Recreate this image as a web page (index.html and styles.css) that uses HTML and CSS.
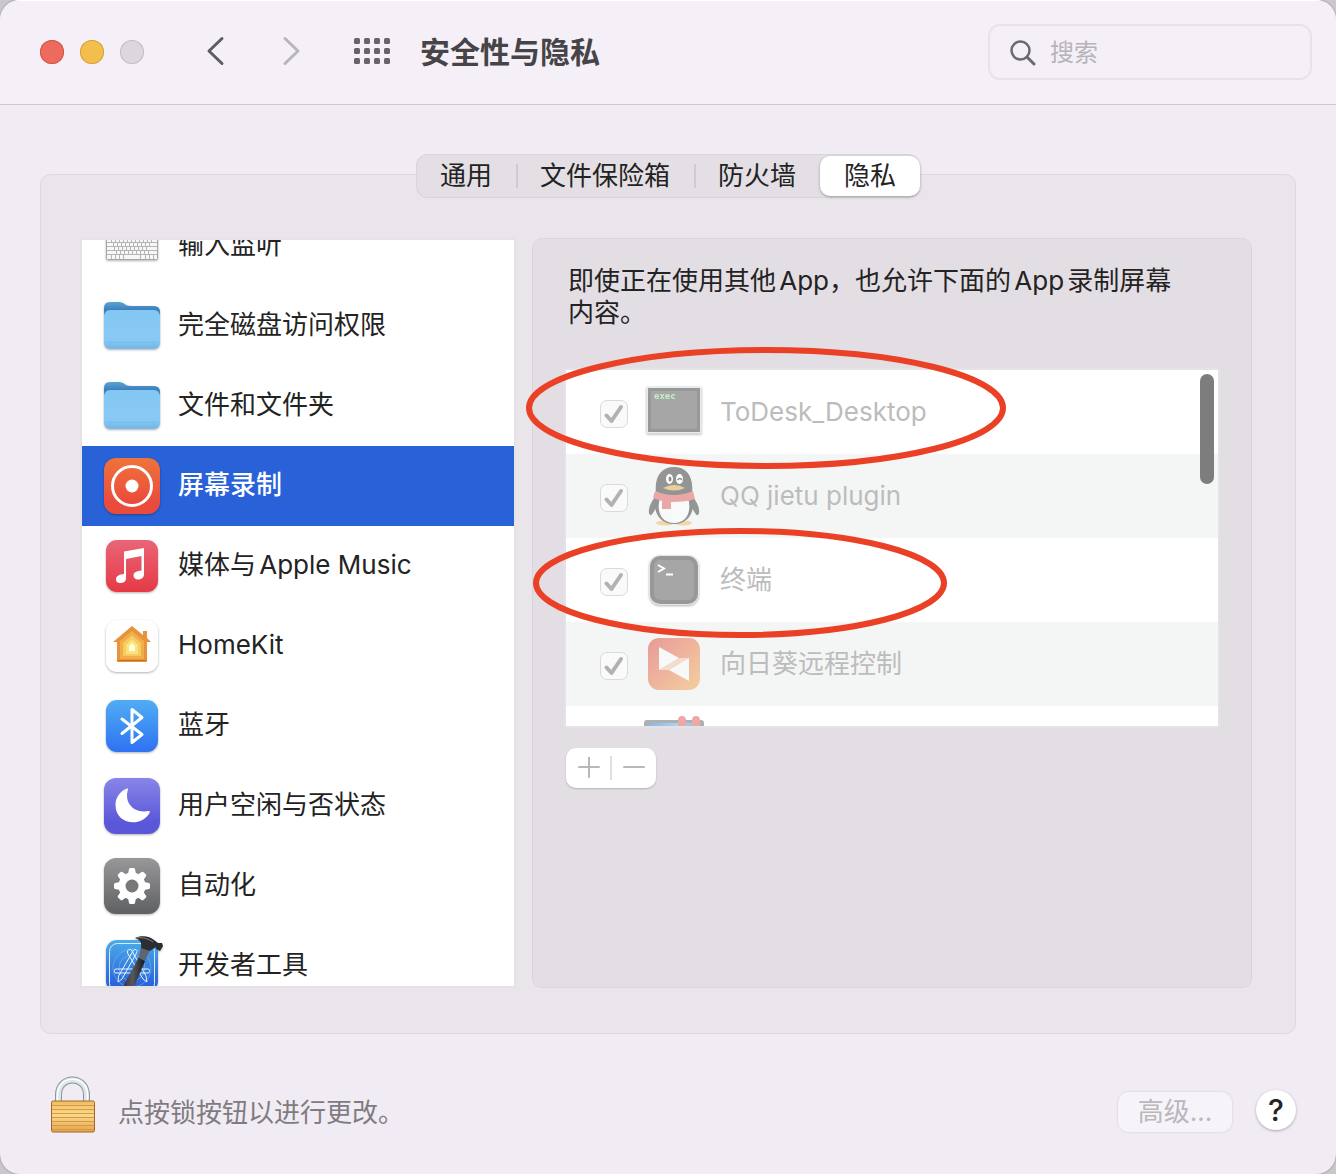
FILE: index.html
```html
<!DOCTYPE html>
<html lang="zh-CN">
<head>
<meta charset="utf-8">
<meta name="viewport" content="width=device-width, initial-scale=1">
<title>安全性与隐私</title>
<link rel="stylesheet" href="styles.css">
</head>
<body>
<svg class="defs" width="0" height="0" aria-hidden="true">
  <defs>
    <linearGradient id="g-back" x2="0" y2="1"><stop offset="0" stop-color="#5ba3d4"/><stop offset=".4" stop-color="#3b7fbd"/></linearGradient>
    <linearGradient id="g-front" x2="0" y2="1"><stop offset="0" stop-color="#84c7f3"/><stop offset=".75" stop-color="#88c9f5"/><stop offset="1" stop-color="#74b7e8"/></linearGradient>
    <linearGradient id="g-record" x2="0" y2="1"><stop offset="0" stop-color="#ef733a"/><stop offset=".8" stop-color="#ea4b3c"/></linearGradient>
    <linearGradient id="g-music" x2="0" y2="1"><stop offset="0" stop-color="#ea6578"/><stop offset="1" stop-color="#e53a45"/></linearGradient>
    <linearGradient id="g-blue" x2="0" y2="1"><stop offset="0" stop-color="#4fadf4"/><stop offset="1" stop-color="#2f72f3"/></linearGradient>
    <linearGradient id="g-moon" x2="0" y2="1"><stop offset="0" stop-color="#8886e8"/><stop offset=".8" stop-color="#5a57d9"/></linearGradient>
    <linearGradient id="g-gear" x2="0" y2="1"><stop offset="0" stop-color="#98989b"/><stop offset="1" stop-color="#5f6062"/></linearGradient>
    <linearGradient id="g-dev" x2="0" y2="1"><stop offset="0" stop-color="#4cabe9"/><stop offset="1" stop-color="#2557d6"/></linearGradient>
    <linearGradient id="g-sun" x2="1" y2="1"><stop offset="0" stop-color="#e99a98"/><stop offset="1" stop-color="#f3cfa0"/></linearGradient>
    <linearGradient id="g-screen" x2="1"><stop offset="0" stop-color="#8fb4e2"/><stop offset=".6" stop-color="#a9d8f3"/><stop offset="1" stop-color="#9bb4dc"/></linearGradient>
    <linearGradient id="g-brass" x2="0" y2="1"><stop offset="0" stop-color="#f1bd5f"/><stop offset=".45" stop-color="#fbd98b"/><stop offset="1" stop-color="#e5a448"/></linearGradient>
    <linearGradient id="g-handle" x2="1"><stop offset="0" stop-color="#2a2b2f"/><stop offset=".5" stop-color="#56585e"/><stop offset="1" stop-color="#17181b"/></linearGradient>
    <symbol id="folder" viewBox="0 0 56 56">
      <path d="M0 10Q0 4 6 4H15C21 4 20 8 27 8H50Q56 8 56 14V24H0Z" fill="url(#g-back)"/>
      <rect y="12" width="56" height="39" rx="6" fill="url(#g-front)"/>
      <path d="M3 44.500H53M3 47.500H53" stroke="#79bbe9"/>
    </symbol>
    <symbol id="check" viewBox="0 0 28 28"><path d="M6.500 15.500 11.500 21 21 7" fill="none" stroke="#b2b2b2" stroke-width="4" stroke-linecap="round" stroke-linejoin="round"/></symbol>
  </defs>
</svg>

<div class="window">
  <header class="toolbar">
    <div class="lights">
      <button class="light light-close" aria-label="关闭"></button>
      <button class="light light-min" aria-label="最小化"></button>
      <button class="light light-zoom" aria-label="缩放" disabled></button>
    </div>
    <div class="history">
      <button class="tool" aria-label="后退"><svg width="20" height="32" viewBox="0 0 20 32"><path d="M17 2.500 4 15 17 27.500" fill="none" stroke="#5f5b62" stroke-width="3" stroke-linecap="round" stroke-linejoin="round"/></svg></button>
      <button class="tool" aria-label="前进" disabled><svg width="20" height="32" viewBox="0 0 20 32"><path d="M4 2.500 17 15 4 27.500" fill="none" stroke="#b9b5bc" stroke-width="3" stroke-linecap="round" stroke-linejoin="round"/></svg></button>
    </div>
    <button class="tool" aria-label="显示全部"><svg width="36" height="28" viewBox="0 0 36 28" fill="#68636b"><g id="dots"><rect width="6" height="6" rx="1.500"/><rect x="10" width="6" height="6" rx="1.500"/><rect x="20" width="6" height="6" rx="1.500"/><rect x="30" width="6" height="6" rx="1.500"/></g><use href="#dots" y="10"/><use href="#dots" y="20"/></svg></button>
    <h1 class="title">安全性与隐私</h1>
    <label class="search">
      <svg width="28" height="28" viewBox="0 0 28 28" fill="none" stroke="#6b6b6e"><circle cx="12.500" cy="12.500" r="9" stroke-width="2.500"/><path d="M19 19 26 26" stroke-width="3" stroke-linecap="round"/></svg>
      <input class="search-input" type="search" placeholder="搜索" aria-label="搜索">
    </label>
  </header>

  <main class="content">
    <nav class="tabs" aria-label="设置分类">
      <button class="tab">通用</button>
      <button class="tab">文件保险箱</button>
      <button class="tab">防火墙</button>
      <button class="tab tab-active" aria-current="page">隐私</button>
    </nav>

    <section class="panel">
      <div class="categories">
        <ul class="category-list">
          <li class="category">
            <svg class="icon" viewBox="0 0 56 56"><rect x="2.500" y="10.500" width="51" height="31" rx="1" fill="#f7f7f7" stroke="#a6a6a6"/><path d="M3 20.500H53M3 24.500H53M3 28.500H53M3 32.500H53M3 36.500H53M7.500 20V24M11.500 20V24M15.500 20V24M19.500 20V24M23.500 20V24M27.500 20V24M31.500 20V24M35.500 20V24M39.500 20V24M43.500 20V24M47.500 20V24M9.500 24V28M13.500 24V28M17.500 24V28M21.500 24V28M25.500 24V28M29.500 24V28M33.500 24V28M37.500 24V28M41.500 24V28M45.500 24V28M10.500 28V32M14.500 28V32M18.500 28V32M22.500 28V32M26.500 28V32M30.500 28V32M34.500 28V32M38.500 28V32M42.500 28V32M12.500 32V36M16.500 32V36M20.500 32V36M24.500 32V36M28.500 32V36M32.500 32V36M36.500 32V36M40.500 32V36M44.500 32V36M7.500 36V41M11.500 36V41M15.500 36V41M19.500 36V41M36.500 36V41M41.500 36V41M45.500 36V41M49.500 36V41" stroke="#b5b5b5"/></svg>
            <span>输入监听</span></li>
          <li class="category"><svg class="icon"><use href="#folder"/></svg><span>完全磁盘访问权限</span></li>
          <li class="category"><svg class="icon"><use href="#folder"/></svg><span>文件和文件夹</span></li>
          <li class="category category-active">
            <svg class="icon" viewBox="0 0 56 56"><rect width="56" height="56" rx="12" fill="url(#g-record)"/><circle cx="28" cy="28" r="19.500" fill="none" stroke="#fff" stroke-width="3"/><circle cx="28" cy="28" r="6.500" fill="#fff"/></svg>
            <span>屏幕录制</span></li>
          <li class="category">
            <svg class="icon" viewBox="0 0 56 56"><rect x="2" y="2" width="52" height="52" rx="11" fill="url(#g-music)"/><path d="M20 13.500 40 10V36C40 40 37 41.500 34 41.500 31 41.500 29.500 39.500 29.500 37.500 29.500 34 33 33 37.500 32.500V18L22 21V40C22 44 19 45 16 45 13.500 45 12 43.500 12 41.500 12 38 15 36.500 20 36Z" fill="#fff"/></svg>
            <span>媒体与Apple Music</span></li>
          <li class="category">
            <svg class="icon" viewBox="0 0 56 56"><rect x="2" y="2" width="52" height="52" rx="11" fill="#fff"/><path d="M39 13H43V20L47 24H43V43Q43 44 42 44H14Q13 44 13 43V24H9L28 8 39 17Z" fill="#e8923c"/><path d="M28 13 40 23V41H16V23Z" fill="#f0ae48"/><path d="M28 17 37 25V38H19V25Z" fill="#f6cc62"/><path d="M28 21 34 27V36H22V27Z" fill="#f9e47b"/><path d="M28 25 31 28V33H25V28Z" fill="#fffde0"/><path d="M13 42.500H43" stroke="#c87327"/></svg>
            <span>HomeKit</span></li>
          <li class="category">
            <svg class="icon" viewBox="0 0 56 56"><rect x="2" y="2" width="52" height="52" rx="11" fill="url(#g-blue)"/><path d="M18 21 38 36.500 28 44.500V11.500L38 19.500 18 35.500" fill="none" stroke="#fff" stroke-width="3" stroke-linecap="round" stroke-linejoin="round"/></svg>
            <span>蓝牙</span></li>
          <li class="category">
            <svg class="icon" viewBox="0 0 56 56"><rect width="56" height="56" rx="12" fill="url(#g-moon)"/><path d="M24 11.500C20 23 28 36 45 33Q46.500 33 45.500 35C37 50 11.500 46.500 11.500 27 11.500 19 17 12.500 23 10.500Q24.500 10 24 11.500Z" fill="#fff"/></svg>
            <span>用户空闲与否状态</span></li>
          <li class="category">
            <svg class="icon" viewBox="0 0 56 56"><rect width="56" height="56" rx="12" fill="url(#g-gear)"/><g fill="#fff"><path id="tooth" d="M24 16 25 11Q25.200 10 26.500 10H29.500Q30.800 10 31 11L32 16V40L31 45Q30.800 46 29.500 46H26.500Q25.200 46 25 45L24 40Z"/><use href="#tooth" transform="rotate(45 28 28)"/><use href="#tooth" transform="rotate(90 28 28)"/><use href="#tooth" transform="rotate(135 28 28)"/><circle cx="28" cy="28" r="13.500"/></g><circle cx="28" cy="28" r="6.500" fill="#77787a"/></svg>
            <span>自动化</span></li>
          <li class="category">
            <svg class="icon" viewBox="0 0 56 56"><rect x="2" y="2" width="52" height="52" rx="11" fill="url(#g-dev)"/><rect x="5.500" y="5.500" width="45" height="48" rx="8" fill="none" stroke="#d7ecfc"/><g fill="none" stroke="#7cc3f2" stroke-opacity=".5"><circle cx="28" cy="30" r="13"/><circle cx="28" cy="30" r="19"/></g><g fill="none" stroke="#e6f4fe" stroke-width="1"><rect x="10.500" y="31" width="35" height="4" rx="1.500"/><path d="M23.500 13Q25 10 27.500 12L42 38 43 44 39 41 23.500 15Z"/><path d="M31 11.500Q34 12 32.500 15L18 41 14 44 14.500 38 29 13Q30 11 31 11.500Z"/></g><path d="M35 19 41 23 28 54H16Z" fill="url(#g-handle)"/><path d="M37 9 46 12 41 23 35 20Z" fill="#606570"/><path d="M31 0C37-3 46-2 50 2L54 5 58 5 59 8 56 13 52 11V9L46 13 37 10C38 4 36 2 31 0Z" fill="#2b2d33"/><path d="M33 0C39-1 45 1 49 4" fill="none" stroke="#81858d"/></svg>
            <span>开发者工具</span></li>
        </ul>
      </div>

      <div class="detail">
        <p class="intro">即使正在使用其他App，也允许下面的App录制屏幕内容。</p>
        <div class="apps-area">
          <div class="apps">
            <ul class="app-list">
              <li><label class="app">
                <span class="tick"><input type="checkbox" checked disabled><svg><use href="#check"/></svg></span>
                <svg class="app-icon app-icon-raised" viewBox="0 0 60 60"><rect x="2.500" y="4.500" width="55" height="47" rx="1" fill="#e8eced"/><rect x="4" y="6" width="52" height="44" fill="#989898"/><rect x="7" y="9" width="46" height="38" fill="#a6a6a6"/><text x="10" y="17" class="exec-text">exec</text></svg>
                <span>ToDesk_Desktop</span></label></li>
              <li><label class="app">
                <span class="tick"><input type="checkbox" checked disabled><svg><use href="#check"/></svg></span>
                <svg class="app-icon" viewBox="0 0 60 60"><ellipse cx="21" cy="57" rx="9" ry="2.500" fill="#f3d7a5"/><ellipse cx="39" cy="57" rx="9" ry="2.500" fill="#f3d7a5"/><path d="M12 30C6 36 3 46 6 49 8 50 10 45 12 42L48 42C50 45 52 50 54 49 57 46 54 36 48 30Z" fill="#959797"/><path d="M12 27C10 10 18 1 30 1S50 10 48 27C52 40 48 58 30 58S8 40 12 27Z" fill="#939595"/><path d="M16 32H44C48 45 43 57 30 57S12 45 16 32Z" fill="#f8f9f9"/><path d="M11 25Q30 33 49 25L51 33Q43 36 27 36V43H18V35L9 32Z" fill="#eaa7a7"/><ellipse cx="25.500" cy="13" rx="3.500" ry="5" fill="#fff"/><ellipse cx="35.500" cy="13" rx="3.500" ry="5" fill="#fff"/><ellipse cx="26" cy="13" rx="1.500" ry="2.500" fill="#8c8e8e"/><path d="M33.500 14Q36 11 38 14" fill="none" stroke="#8c8e8e" stroke-width="1.500"/><path d="M19 22Q30 16 41 22 30 27 19 22Z" fill="#eccf9d"/></svg>
                <span>QQ jietu plugin</span></label></li>
              <li><label class="app">
                <span class="tick"><input type="checkbox" checked disabled><svg><use href="#check"/></svg></span>
                <svg class="app-icon app-icon-raised" viewBox="0 0 60 60"><rect x="5" y="5" width="50" height="50" rx="11" fill="#e3e8ea"/><rect x="6" y="6" width="48" height="48" rx="10" fill="#989898"/><rect x="10" y="10" width="40" height="40" rx="6" fill="#a6a6a6"/><path d="M14 15 20 18.500 14 22M22 24.500H29" fill="none" stroke="#fff" stroke-width="2"/></svg>
                <span>终端</span></label></li>
              <li><label class="app">
                <span class="tick"><input type="checkbox" checked disabled><svg><use href="#check"/></svg></span>
                <svg class="app-icon" viewBox="0 0 60 60"><rect x="4" y="4" width="52" height="52" rx="11" fill="url(#g-sun)"/><path d="M15 36 35 24H45L25 36Z" fill="#f3dccd"/><path d="M15 13 35 24 15 36ZM45 24V47L25 36Z" fill="#f7f8f8"/></svg>
                <span>向日葵远程控制</span></label></li>
              <li><div class="app">
                <span class="tick"></span>
                <svg class="app-icon" viewBox="0 0 60 60"><rect y="2" width="60" height="44" rx="3" fill="#aeb0b2"/><rect x="4" y="5" width="52" height="36" fill="url(#g-screen)"/><rect x="34" y="-2" width="8" height="30" rx="4" fill="#eda9aa"/><rect x="48" y="-2" width="8" height="30" rx="4" fill="#eda9aa"/></svg>
              </div></li>
            </ul>
            <div class="scroll-thumb"></div>
          </div>
          <svg class="marks" aria-hidden="true"><g fill="none" stroke="#ea4126" stroke-width="6"><ellipse cx="202" cy="40" rx="237" ry="58"/><ellipse cx="176" cy="215" rx="204" ry="52"/></g></svg>
        </div>
        <div class="add-remove">
          <button class="step" aria-label="添加" disabled><svg width="22" height="22" viewBox="0 0 22 22"><path d="M1 10H21M11 0V20" stroke="#b8b8b8" stroke-width="2" stroke-linecap="round"/></svg></button>
          <button class="step" aria-label="移除" disabled><svg width="22" height="22" viewBox="0 0 22 22"><path d="M1 10H21" stroke="#b8b8b8" stroke-width="2" stroke-linecap="round"/></svg></button>
        </div>
      </div>
    </section>
  </main>

  <footer class="footer">
    <button class="lock" aria-label="锁"><svg width="46" height="58" viewBox="0 0 46 58"><path d="M8.500 25V19C8.500 -1 36.500 -1 36.500 19V25" fill="none" stroke="#8b969c" stroke-width="7"/><path d="M8.500 25V19C8.500 -1 36.500 -1 36.500 19V25" fill="none" stroke="#dce5e9" stroke-width="5"/><path d="M7.500 25V19C7.500 -2 37.500 -2 37.500 19V25" fill="none" stroke="#fff" stroke-width="1.500"/><rect x="1.500" y="25" width="43" height="31" rx="1.500" fill="url(#g-brass)" stroke="#a9642b"/><path d="M2 29.500H44M2 33.500H44M2 37.500H44M2 41.500H44M2 45.500H44M2 49.500H44M2 53.500H44" stroke="#d39a4a"/></svg></button>
    <p class="lock-text">点按锁按钮以进行更改。</p>
    <button class="advanced" disabled>高级...</button>
    <button class="help" aria-label="帮助">?</button>
  </footer>
</div>
</body>
</html>
```
FILE: styles.css
```css
* { box-sizing: border-box; }

body {
  margin: 0;
  background: #cbc8cc;
  color: #232323;
  font: 26px/32px Inter, "Noto Sans CJK SC", sans-serif;
  text-autospace: normal;
}

button {
  padding: 0;
  border: 0;
  background: none;
  color: inherit;
  font: inherit;
}

ul, p, h1 { margin: 0; padding: 0; list-style: none; }
svg { display: block; flex: none; }
.defs { position: absolute; }

.window {
  display: flex;
  flex-direction: column;
  height: 100vh;
  overflow: hidden;
  border-radius: 20px;
  background: #f1ecf3;
  box-shadow: 0 0 2px #77747a;
}

/* Toolbar */
.toolbar {
  display: flex;
  align-items: center;
  height: 105px;
  padding: 0 24px 0 40px;
  border-bottom: 1px solid #cbc7cd;
  background: #f5f0f8;
  box-shadow: inset 0 1px #fff;
}
.lights { display: flex; gap: 16px; }
.light { width: 24px; height: 24px; border-radius: 50%; }
.light-close { background: #ec6a5e; box-shadow: inset 0 0 0 1px #d5554b; }
.light-min { background: #f4be4f; box-shadow: inset 0 0 0 1px #d8a13d; }
.light-zoom { background: #dcd7de; box-shadow: inset 0 0 0 1px #c3bec5; }
.history { display: flex; gap: 56px; margin: 0 53px 0 61px; }
.title {
  margin-left: 30px;
  color: #464447;
  font-size: 30px;
  line-height: 40px;
  font-weight: 700;
}
.search {
  display: flex;
  align-items: center;
  gap: 14px;
  width: 324px;
  height: 56px;
  margin-left: auto;
  padding: 0 18px;
  border: 2px solid #e8e3ea;
  border-radius: 12px;
}
.search-input {
  flex: 1;
  min-width: 0;
  padding: 2px 0 0;
  border: 0;
  outline: 0;
  background: none;
  font: inherit;
  font-size: 24px;
}
.search-input::placeholder { color: #b7b3b9; }

/* Content */
.content {
  display: flex;
  flex: 1;
  flex-direction: column;
  min-height: 0;
  padding: 49px 40px 0;
}
.tabs {
  z-index: 1;
  display: flex;
  align-self: center;
  height: 44px;
  margin-bottom: -24px;
  border-radius: 12px;
  background: #e4dfe5;
  box-shadow: inset 0 0 0 1px #d9d4da;
}
.tab {
  position: relative;
  padding: 0 24px;
}
.tab:nth-child(-n+2)::after {
  content: "";
  position: absolute;
  top: 10px;
  right: -2px;
  width: 2px;
  height: 24px;
  background: #cfcad0;
}
.tab-active {
  margin: 2px 0;
  border-radius: 10px;
  background: #fff;
  box-shadow: 0 1px 3px #9c989e;
}
.panel {
  display: flex;
  flex: 1;
  gap: 16px;
  min-height: 0;
  padding: 63px 43px 45px 39px;
  border: 1px solid #ded9df;
  border-radius: 10px;
  background: #eae5eb;
}

/* Categories */
.categories {
  flex: 0 0 436px;
  overflow: hidden;
  border: 2px solid #e4e2e5;
  background: #fff;
}
.category-list { margin-top: -34px; }
.category {
  display: flex;
  align-items: center;
  gap: 18px;
  height: 80px;
  padding-left: 22px;
}
.category span { padding-bottom: 3px; }
.category-active { background: #2961d9; color: #fff; font-weight: 500; }
.icon {
  width: 56px;
  height: 56px;
  overflow: visible;
  filter: drop-shadow(0 1px 1px rgba(0, 0, 0, .3));
}

/* Detail */
.detail {
  flex: 1;
  min-width: 0;
  padding: 26px 31px;
  border: 1px solid #dad5db;
  border-radius: 10px;
  background: #e3dee4;
}
.intro { padding: 0 36px 0 4px; }
.apps-area { position: relative; margin-top: 39px; }
.apps {
  position: relative;
  height: 360px;
  overflow: hidden;
  border: 2px solid #e4e2e5;
  background: #fff;
}
.app-list li:nth-child(even) { background: #f4f6f5; }
.app {
  display: flex;
  align-items: center;
  gap: 16px;
  height: 84px;
  padding-left: 34px;
  color: #bcbcbc;
}
.tick {
  display: grid;
  width: 28px;
  height: 28px;
  margin-top: 4px;
}
.tick > * { grid-area: 1 / 1; width: 28px; height: 28px; }
.tick input {
  margin: 0;
  appearance: none;
  border: 1px solid #dadada;
  border-radius: 7px;
  background: #fafafa;
}
.app-icon { width: 60px; height: 60px; overflow: visible; }
.app-icon-raised { filter: drop-shadow(0 1px 1px rgba(0, 0, 0, .3)); }
.exec-text {
  fill: #c4f2c4;
  font: bold 9px "DejaVu Sans Mono", monospace;
}
.scroll-thumb {
  position: absolute;
  top: 4px;
  right: 4px;
  width: 14px;
  height: 110px;
  border-radius: 7px;
  background: #7d7d7d;
}
.marks {
  position: absolute;
  top: 0;
  left: 0;
  width: 100%;
  height: 100%;
  overflow: visible;
  pointer-events: none;
}
.add-remove {
  display: flex;
  width: 90px;
  height: 40px;
  margin: 20px 0 0 2px;
  border-radius: 10px;
  background: #fff;
  box-shadow: 0 1px 2px #b5b1b7;
}
.step {
  display: flex;
  flex: 1;
  align-items: center;
  justify-content: center;
  position: relative;
}
.step + .step::before {
  content: "";
  position: absolute;
  top: 8px;
  left: -1px;
  width: 2px;
  height: 24px;
  background: #e0e0e0;
}

/* Footer */
.footer {
  display: flex;
  align-items: center;
  height: 140px;
  padding: 0 40px 0 50px;
}
.lock { margin-right: 22px; padding-top: 2px; }
.lock-text { padding-top: 18px; color: #7f7b81; }
.advanced {
  width: 114px;
  height: 40px;
  margin: 16px 24px 0 auto;
  border-radius: 10px;
  background: #f7f4f9;
  box-shadow: 0 0 2px #c5c1c7;
  color: #bbb7bd;
  text-autospace: no-autospace;
}
.help {
  width: 40px;
  height: 40px;
  margin-top: 12px;
  border-radius: 50%;
  background: #fff;
  box-shadow: 0 1px 3px #aaa6ac;
  font-size: 30px;
  font-weight: 500;
}
```
